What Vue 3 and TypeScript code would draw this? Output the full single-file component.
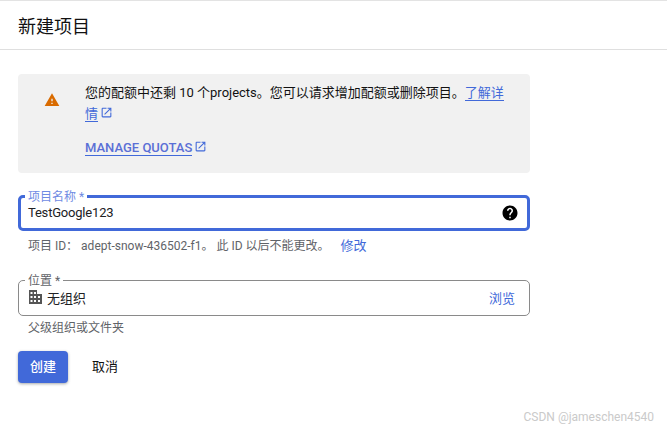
<template>
  <div class="page">
    <header class="page-header">
      <h1>新建项目</h1>
    </header>

    <main class="content">
      <section class="quota-banner">
        <div class="banner-icon">
          <svg width="16" height="16" viewBox="0 0 24 24">
            <path fill="#d96b00" d="M1 21h22L12 2 1 21zm12-3h-2v-2h2v2zm0-4h-2v-4h2v4z" />
          </svg>
        </div>
        <div class="banner-body">
          <p class="banner-text">
            您的配额中还剩 10 个projects。您可以请求增加配额或删除项目。<a class="link">了解详情</a><svg class="ext" width="13" height="13" viewBox="0 0 24 24"><path :d="externalIcon" /></svg>
          </p>
          <p class="banner-action">
            <a class="link strong">MANAGE QUOTAS</a><svg class="ext" width="13" height="13" viewBox="0 0 24 24"><path :d="externalIcon" /></svg>
          </p>
        </div>
      </section>

      <div class="field focused">
        <span class="field-label">项目名称 *</span>
        <span class="field-value">TestGoogle123</span>
        <svg class="help" width="18" height="18" viewBox="0 0 24 24">
          <path d="M12 2C6.48 2 2 6.48 2 12s4.48 10 10 10 10-4.48 10-10S17.52 2 12 2zm1 17h-2v-2h2v2zm2.07-7.75l-.9.92C13.45 12.9 13 13.5 13 15h-2v-.5c0-1.1.45-2.1 1.17-2.83l1.24-1.26c.37-.36.59-.86.59-1.41 0-1.1-.9-2-2-2s-2 .9-2 2H8c0-2.21 1.79-4 4-4s4 1.79 4 4c0 .88-.36 1.68-.93 2.25z" />
        </svg>
      </div>
      <p class="hint project-id">
        <span>项目 ID： adept-snow-436502-f1。 此 ID 以后不能更改。</span>
        <a class="edit">修改</a>
      </p>

      <div class="field location">
        <span class="field-label">位置 *</span>
        <svg class="org-icon" width="14" height="14" viewBox="0 0 14 14">
          <path
            fill="#555"
            fill-rule="evenodd"
            d="M1 0h8v4h5v10H1V0zM2.5 2v2h2V2h-2zm3.5 0v2h2V2H6zM2.5 6v2h2V6h-2zM6 6v2h2V6H6zm4 0v2h2V6h-2zM2.5 10v2h2v-2h-2zM6 10v2h2v-2H6zm4 0v2h2v-2h-2z"
          />
        </svg>
        <span class="field-value">无组织</span>
        <a class="browse">浏览</a>
      </div>
      <p class="hint parent">父级组织或文件夹</p>

      <div class="actions">
        <button class="btn primary" type="button">创建</button>
        <button class="btn plain" type="button">取消</button>
      </div>
    </main>

    <footer class="watermark">CSDN @jameschen4540</footer>
  </div>
</template>

<script setup lang="ts">
const externalIcon =
  'M19 19H5V5h7V3H5a2 2 0 0 0-2 2v14a2 2 0 0 0 2 2h14c1.1 0 2-.9 2-2v-7h-2v7zM14 3v2h3.59l-9.83 9.83 1.41 1.41L19 6.41V10h2V3h-7z'
</script>

<style>
html,
body {
  margin: 0;
  background: #fff;
}
</style>

<style scoped>
.page {
  width: 667px;
  height: 430px;
  box-sizing: border-box;
  position: relative;
  overflow: hidden;
  border-top: 1px solid #e3e3e3;
  font-family: Roboto, "Noto Sans CJK SC", sans-serif;
  font-size: 13px;
  color: #202124;
}

.page-header {
  height: 49px;
  box-sizing: border-box;
  border-bottom: 1px solid #dfdfdf;
  padding-left: 18px;
  display: flex;
  align-items: center;
}

.page-header h1 {
  margin: 0;
  font-size: 18px;
  font-weight: 400;
  color: #111;
}

.content {
  width: 512px;
  margin-left: 18px;
  padding-top: 24px;
}

.quota-banner {
  height: 99px;
  box-sizing: border-box;
  display: flex;
  background: #f1f1f1;
  border-radius: 4px;
  padding: 8px 24px 0 0;
}

.banner-icon {
  width: 67px;
  flex: none;
  padding: 10px 0 0 26px;
  box-sizing: border-box;
}

.banner-text {
  margin: 0;
  line-height: 21px;
  color: #111;
}

.banner-action {
  margin: 14px 0 0;
  line-height: 20px;
}

.link {
  color: #4169d9;
  border-bottom: 1px solid #4169d9;
}

.strong {
  font-weight: 500;
  font-size: 13px;
  color: #5a6fd6;
}

.ext {
  fill: #4169d9;
  margin-left: 2px;
  vertical-align: -1px;
}

.field {
  position: relative;
  box-sizing: border-box;
  height: 36px;
  display: flex;
  align-items: center;
  background: #fff;
}

.focused {
  margin-top: 22px;
  border: 3px solid #4169d9;
  border-radius: 5px;
  padding: 0 8px 2px 7px;
  justify-content: space-between;
}

.focused .help {
  margin-bottom: -2px;
}

.focused .field-value {
  letter-spacing: -0.2px;
}

.location {
  margin-top: 25px;
  border: 1px solid #8a8a8a;
  border-radius: 5px;
  padding: 0 14px 2px 9px;
}

.field-label {
  position: absolute;
  background: #fff;
  padding: 0 3px;
  line-height: 14px;
  font-size: 12px;
}

.focused .field-label {
  left: 4px;
  top: -8px;
  color: #6f8be3;
}

.location .field-label {
  left: 6px;
  top: -7px;
  color: #5f6368;
}

.field-value {
  color: #202124;
}

.help {
  display: block;
}

.org-icon {
  margin-right: 5px;
}

.browse {
  margin-left: auto;
  color: #4169d9;
}

.hint {
  margin: 0;
  padding-left: 10px;
  font-size: 12px;
  color: #5f6368;
  line-height: 18px;
}

.project-id {
  margin-top: 6px;
  display: flex;
}

.edit {
  margin-left: 11px;
  font-size: 13px;
  color: #4169d9;
}

.parent {
  margin-top: 3px;
}

.actions {
  margin-top: 14px;
  display: flex;
}

.btn {
  height: 32px;
  border: none;
  border-radius: 4px;
  font-family: inherit;
  font-size: 13px;
  padding: 0 0 3px;
}

.primary {
  width: 50px;
  background: #4169d9;
  color: #fff;
  font-weight: 500;
  box-shadow: 0 1px 3px rgba(60, 64, 67, 0.45);
}

.plain {
  width: 50px;
  margin-left: 12px;
  background: transparent;
  color: #111;
}

.watermark {
  position: absolute;
  right: 13px;
  bottom: 6px;
  font-size: 12px;
  color: #cacaca;
}
</style>
